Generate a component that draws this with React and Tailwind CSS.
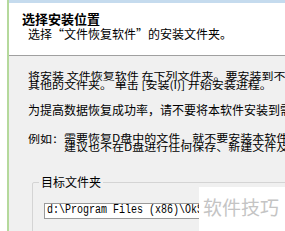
export default function App() {
  return (
    <div className="relative w-[285px] h-[231px] overflow-hidden bg-white font-['Noto_Sans_CJK_SC',sans-serif] text-[12px] text-black">
      <div className="flex h-full">
        {/* left gutter + green edge */}
        <div className="w-[7px] shrink-0 bg-white" />
        <div className="w-[2px] shrink-0 bg-[#b5d99c]" />

        <div className="flex-1 flex flex-col min-w-0">
          <div className="h-[3px] shrink-0 bg-[#c5dbee]" />

          {/* header */}
          <div className="h-[53px] shrink-0 bg-white border-b border-[#a0a0a0] pl-[13px] pt-[8px] whitespace-nowrap">
            <div className="text-[13px] font-bold leading-[15px]">选择安装位置</div>
            <div className="pl-[6px] leading-[15px]">选择“文件恢复软件”的安装文件夹。</div>
          </div>

          {/* body */}
          <div className="flex-1 min-h-0 overflow-hidden bg-[#f0f0f0] pl-[19px] pt-[15px] whitespace-nowrap">
            <div className="leading-[9px]">
              <div className="scale-y-[0.88]">将安装 文件恢复软件 在下列文件夹。要安装到不同文件夹，单击</div>
              <div className="scale-y-[0.88]">其他的文件夹。 单击 [安装(I)] 开始安装进程。</div>
            </div>

            <div className="mt-[15px] leading-[12px]">为提高数据恢复成功率，请不要将本软件安装到需要恢复的磁盘</div>

            <div className="mt-[17px] flex leading-[9px]">
              <span className="scale-y-[0.88]">例如：</span>
              <div>
                <div className="scale-y-[0.88]">需要恢复D盘中的文件，就不要安装本软件到D盘，</div>
                <div className="scale-y-[0.88]">建议也不在D盘进行任何保存、新建文件及安装操作。</div>
              </div>
            </div>

            {/* target folder group */}
            <div className="relative mt-[31px] ml-[4px] w-[300px] h-[60px] border border-[#d4d4d4] rounded-[2px] pl-[11px] pt-[20px]">
              <span className="absolute -top-[9px] left-[6px] bg-[#f0f0f0] px-[2px] leading-[16px]">目标文件夹</span>
              <div className="h-[16px] w-[200px] bg-white border border-[#9a9a9a] flex items-center pl-[2px] font-['Liberation_Mono',monospace] text-[10px] leading-[12px]">
                <span className="scale-y-[1.2]">d</span>
                <span className="w-px h-[11px] bg-black" />
                <span className="scale-y-[1.2]">:\Program Files (x86)\OkSoft\文件恢复软件</span>
              </div>
            </div>
          </div>
        </div>
      </div>

      {/* watermark */}
      <div className="absolute left-[199px] top-[187px] w-[86px] h-[44px] bg-white flex items-start pt-[9px] pl-[4px]">
        <span className="text-[19px] leading-[22px] text-[#c4c4c4] whitespace-nowrap">软件技巧</span>
      </div>
    </div>
  );
}
